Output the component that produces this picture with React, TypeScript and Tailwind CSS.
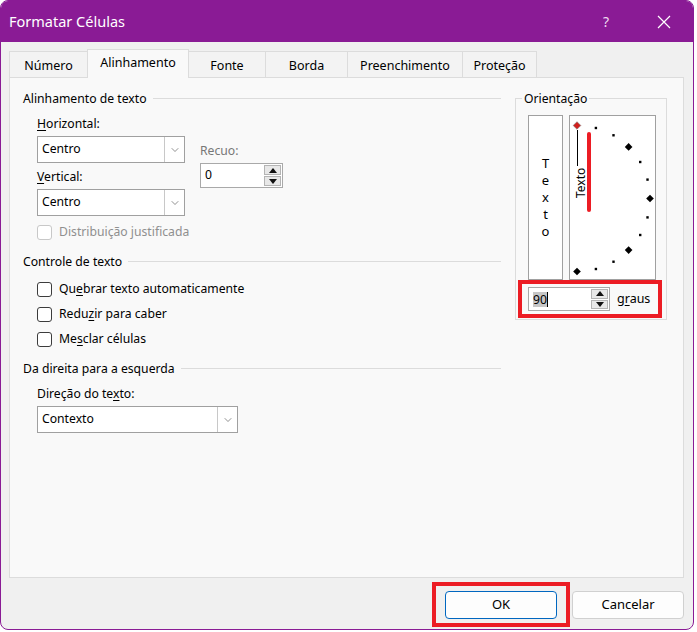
import React from 'react';
import { ChevronDown } from 'lucide-react';

// Formatar Células dialog (Alinhamento tab)

const tabs = [
    { label: 'Número', w: 'w-[79px]' },
    { label: 'Alinhamento', w: 'w-[102px]', active: true },
    { label: 'Fonte', w: 'w-[78px]' },
    { label: 'Borda', w: 'w-[83px]' },
    { label: 'Preenchimento', w: 'w-[116px]' },
    { label: 'Proteção', w: 'w-[75px]' },
];

const SectionHeading: React.FC<{ title: string; className?: string }> = ({ title, className }) => (
    <div className={`flex h-[17px] items-center ${className || ''}`}>
        <span className="leading-[17px]">{title}</span>
        <div className="ml-[6px] h-px flex-1 bg-[#dcdcdc]" />
    </div>
);

const Dropdown: React.FC<{ value: string; width: string }> = ({ value, width }) => (
    <div className={`flex h-[27px] border border-[#a0a0a0] bg-white ${width}`}>
        <div className="flex flex-1 items-center pl-[4px]">{value}</div>
        <div className="flex w-[20px] items-center justify-center border-l border-[#c8c8c8]">
            <ChevronDown size={12} strokeWidth={1.3} color="#555" />
        </div>
    </div>
);

const SpinButtons: React.FC = () => (
    <div className="flex w-[19px] flex-col gap-px p-px">
        <div className="flex flex-1 items-center justify-center border border-[#b4b4b4] bg-[#e8e8e8]">
            <svg width="8" height="5" viewBox="0 0 8 5">
                <polygon points="4,0 8,5 0,5" fill="#111" />
            </svg>
        </div>
        <div className="flex flex-1 items-center justify-center border border-[#b4b4b4] bg-[#e8e8e8]">
            <svg width="8" height="5" viewBox="0 0 8 5">
                <polygon points="0,0 8,0 4,5" fill="#111" />
            </svg>
        </div>
    </div>
);

const CheckRow: React.FC<{ children: React.ReactNode; disabled?: boolean; className?: string }> = ({
    children,
    disabled,
    className,
}) => (
    <div className={`ml-[14px] flex items-center ${className || ''}`}>
        <div
            className={`h-[15px] w-[15px] rounded-[3px] border bg-white ${
                disabled ? 'border-[#c8c8c8] bg-[#f9f9f9]' : 'border-[#3c3c3c]'
            }`}
        />
        <span className={`ml-[7px] ${disabled ? 'text-[#8f8f8f]' : ''}`}>{children}</span>
    </div>
);

// dial: center and radius relative to the inner box
const cx = 7;
const cy = 82.5;
const r = 73;
const marks = Array.from({ length: 13 }, (_, i) => {
    const a = ((-90 + i * 15) * Math.PI) / 180;
    return { x: cx + r * Math.cos(a), y: cy + r * Math.sin(a), big: i % 3 === 0, i };
});

const Dial: React.FC = () => (
    <svg width="85" height="163" viewBox="0 0 85 163">
        {marks.map((m) =>
            m.big ? (
                <polygon
                    key={m.i}
                    points={`${m.x},${m.y - 3.8} ${m.x + 3.8},${m.y} ${m.x},${m.y + 3.8} ${m.x - 3.8},${m.y}`}
                    fill={m.i === 0 ? '#d0201e' : '#000'}
                    stroke={m.i === 0 ? '#7a7a7a' : 'none'}
                    strokeWidth={0.6}
                />
            ) : (
                <rect key={m.i} x={m.x - 1.2} y={m.y - 1.2} width={2.4} height={2.4} fill="#000" />
            )
        )}
        <line x1={7.5} y1={14} x2={7.5} y2={50} stroke="#000" strokeWidth={1} />
        <text
            transform="translate(14.5,82) rotate(-90)"
            fontSize={12}
            fontFamily="'Noto Sans', sans-serif"
            fill="#000"
        >
            Texto
        </text>
        <line x1={19} y1={18} x2={19} y2={94} stroke="#ec1c24" strokeWidth={4} strokeLinecap="round" />
    </svg>
);

const App: React.FC = () => {
    return (
        <div className="h-[632px] w-[697px] bg-white font-['Noto_Sans',sans-serif] text-[12.2px] text-black">
            <div className="flex h-[630px] w-[694px] flex-col overflow-hidden rounded-lg border border-[#8a1b95] bg-[#f0f0f0]">
                {/* Title bar */}
                <div className="flex h-[41px] items-center bg-[#8a1b95] pl-[8px] text-white">
                    <span className="text-[14.5px]">Formatar Células</span>
                    <span className="ml-auto w-[58px] text-center text-[14px] text-[#f0dcf2]">?</span>
                    <div className="flex w-[58px] justify-center">
                        <svg width="14" height="14" viewBox="0 0 14 14">
                            <path d="M1 1 L13 13 M13 1 L1 13" stroke="#fff" strokeWidth={1.2} />
                        </svg>
                    </div>
                </div>

                {/* Tabs */}
                <div className="mt-[7px] flex items-end pl-[8px]">
                    {tabs.map((t) =>
                        t.active ? (
                            <div
                                key={t.label}
                                className={`relative z-10 -ml-px flex h-[29px] items-center justify-center border border-b-0 border-[#dcdcdc] bg-[#f9f9f9] pb-[1px] text-[12.5px] ${t.w}`}
                            >
                                {t.label}
                            </div>
                        ) : (
                            <div
                                key={t.label}
                                className={`-ml-px mb-px flex h-[26px] items-center justify-center border border-b-0 border-[#dcdcdc] bg-[#f3f3f3] pt-[3px] text-[12.5px] first:ml-0 ${t.w}`}
                            >
                                {t.label}
                            </div>
                        )
                    )}
                </div>

                {/* Panel */}
                <div className="-mt-px ml-[8px] flex h-[501px] w-[675px] items-start border border-[#dcdcdc] bg-[#f9f9f9] pl-[13px] pt-[12px]">
                    {/* Left column */}
                    <div className="flex w-[478px] flex-col">
                        <SectionHeading title="Alinhamento de texto" />
                        <div className="ml-[14px] mt-[9px] flex items-start">
                            <div className="flex w-[148px] flex-col">
                                <div className="h-[16px] leading-[16px]">
                                    <span className="underline underline-offset-2">H</span>orizontal:
                                </div>
                                <div className="mt-[4px]">
                                    <Dropdown value="Centro" width="w-[148px]" />
                                </div>
                                <div className="mt-[6px] h-[16px] leading-[16px]">
                                    <span className="underline underline-offset-2">V</span>ertical:
                                </div>
                                <div className="mt-[4px]">
                                    <Dropdown value="Centro" width="w-[148px]" />
                                </div>
                            </div>
                            <div className="ml-[15px] flex flex-col">
                                <div className="mt-[27px] h-[16px] leading-[16px] text-[#777]">Recuo:</div>
                                <div className="mt-[4px] flex h-[25px] w-[83px] border border-[#a9a9a9] bg-white">
                                    <div className="flex flex-1 items-center pl-[4px]">0</div>
                                    <SpinButtons />
                                </div>
                            </div>
                        </div>
                        <CheckRow disabled className="mt-[8px] h-[16px]">
                            Distribuição justificada
                        </CheckRow>

                        <SectionHeading title="Controle de texto" className="mt-[13px]" />
                        <CheckRow className="mt-[9px] h-[20px]">
                            Qu<span className="underline underline-offset-2">e</span>brar texto automaticamente
                        </CheckRow>
                        <CheckRow className="mt-[5px] h-[20px]">
                            Redu<span className="underline underline-offset-2">z</span>ir para caber
                        </CheckRow>
                        <CheckRow className="mt-[5px] h-[20px]">
                            Me<span className="underline underline-offset-2">s</span>clar células
                        </CheckRow>

                        <SectionHeading title="Da direita para a esquerda" className="mt-[11px]" />
                        <div className="ml-[14px] mt-[9px] h-[16px] leading-[16px]">
                            Direção do te<span className="underline underline-offset-2">x</span>to:
                        </div>
                        <div className="ml-[14px] mt-[4px]">
                            <Dropdown value="Contexto" width="w-[201px]" />
                        </div>
                    </div>

                    {/* Orientação */}
                    <fieldset className="ml-[14px] w-[152px] border border-[#dcdcdc]">
                        <legend className="ml-[6px] px-[2px] leading-[17px]">Orientação</legend>
                        <div className="ml-[12px] mt-[8px] flex">
                            <div className="flex h-[165px] w-[35px] flex-col items-center justify-center border border-[#a0a0a0] bg-white text-[13px] leading-[17px]">
                                <span>T</span>
                                <span>e</span>
                                <span>x</span>
                                <span>t</span>
                                <span>o</span>
                            </div>
                            <div className="ml-[6px] h-[165px] w-[87px] border border-[#a0a0a0] bg-white">
                                <Dial />
                            </div>
                        </div>
                        <div className="mb-px ml-[2px] flex h-[38px] w-[144px] items-start border-4 border-[#ec1c24] pl-[6px] pt-[3px]">
                            <div className="flex h-[24px] w-[82px] border border-[#a9a9a9] bg-white">
                                <div className="flex flex-1 items-center pl-[4px]">
                                    <span className="bg-[#c6c6c6] leading-[15px]">90</span>
                                    <span className="h-[15px] w-px bg-black" />
                                </div>
                                <SpinButtons />
                            </div>
                            <span className="ml-[7px] mt-[3px] text-[12.5px]">
                                g<span className="underline underline-offset-2">r</span>aus
                            </span>
                        </div>
                    </fieldset>
                </div>

                {/* Buttons */}
                <div className="mt-[4px] flex items-start justify-end pr-[9px]">
                    <div className="h-[45px] w-[138px] border-4 border-[#ec1c24] pl-[9px] pt-[5px]">
                        <button className="h-[28px] w-[112px] rounded-[4px] border border-[#0067c0] bg-[#fdfdfd] text-[13px] font-normal">
                            OK
                        </button>
                    </div>
                    <button className="ml-[2px] mt-[9px] h-[28px] w-[112px] rounded-[4px] border border-[#d0d0d0] bg-[#fdfdfd] text-[13px] font-normal">
                        Cancelar
                    </button>
                </div>
            </div>
        </div>
    );
};

export default App;
